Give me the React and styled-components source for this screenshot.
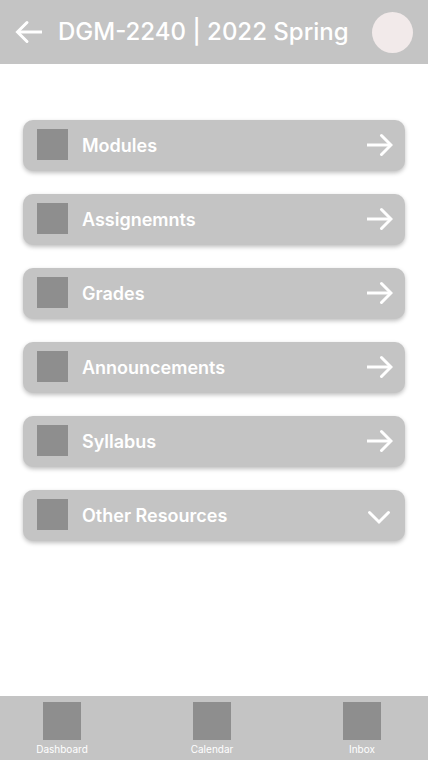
import React from "react";
import styled, { createGlobalStyle } from "styled-components";

const GlobalStyle = createGlobalStyle`
  *, *::before, *::after { box-sizing: border-box; }
  body {
    margin: 0;
    background: #ffffff;
    font-family: Inter, "Liberation Sans", sans-serif;
  }
`;

const Screen = styled.div`
  display: flex;
  flex-direction: column;
  min-height: 100vh;
`;

const Header = styled.header`
  display: flex;
  align-items: center;
  height: 64px;
  padding: 0 15px;
  background: #c4c4c4;
  color: #ffffff;
`;

const IconButton = styled.button`
  display: flex;
  padding: 0;
  border: 0;
  border-radius: ${({ $round }) => ($round ? "50%" : "0")};
  width: ${({ $size }) => $size}px;
  height: ${({ $size }) => $size}px;
  flex: none;
  align-items: center;
  justify-content: center;
  background: ${({ $fill }) => $fill || "transparent"};
  color: inherit;
  cursor: pointer;
`;

const Title = styled.h1`
  flex: 1;
  margin: 0 0 0 15px;
  font-size: 24px;
  font-weight: 500;
  line-height: 32px;
  white-space: nowrap;
`;

const Menu = styled.main`
  display: flex;
  flex: 1;
  flex-direction: column;
  gap: 23px;
  padding: 56px 23px;
`;

const MenuCard = styled.button`
  display: flex;
  align-items: center;
  width: 100%;
  padding: 9px 12px 11px 14px;
  border: 0;
  border-radius: 10px;
  background: #c4c4c4;
  box-shadow: 0 2px 4px rgba(0, 0, 0, 0.25);
  color: #ffffff;
  font-family: inherit;
  text-align: left;
  cursor: pointer;
`;

const Tile = styled.span`
  display: block;
  flex: none;
  width: ${({ $size }) => $size}px;
  height: ${({ $size }) => $size}px;
  background: #8e8e8e;
`;

const CardLabel = styled.span`
  flex: 1;
  margin-left: 14px;
  padding-top: 2px;
  font-size: 18px;
  font-weight: 600;
  line-height: 24px;
`;

const Glyph = styled.svg`
  display: block;
  flex: none;
  fill: none;
  stroke: currentColor;
  stroke-width: 3;
  stroke-linejoin: miter;
`;

const TabBar = styled.nav`
  display: flex;
  justify-content: space-between;
  height: 64px;
  padding: 6px 32px 0 28px;
  background: #c4c4c4;
`;

const Tab = styled.a`
  display: flex;
  flex-direction: column;
  align-items: center;
  gap: 3px;
  width: 68px;
  color: #ffffff;
  font-size: 10px;
  line-height: 12px;
  text-decoration: none;
`;

function ArrowLeft() {
  return (
    <Glyph width="28" height="24" viewBox="0 0 28 24" aria-hidden="true">
      <path d="M27 12H3" />
      <path d="M12 2.5L2.5 12L12 21.5" strokeLinecap="round" />
    </Glyph>
  );
}

function ArrowRight() {
  return (
    <Glyph width="28" height="24" viewBox="0 0 28 24" aria-hidden="true">
      <path d="M2 12H26" />
      <path d="M16.5 2.5L26 12L16.5 21.5" strokeLinecap="round" />
    </Glyph>
  );
}

function ChevronDown() {
  return (
    <Glyph width="28" height="24" viewBox="0 0 28 24" aria-hidden="true">
      <path d="M4.5 9.5L14 19L23.5 9.5" strokeLinecap="round" />
    </Glyph>
  );
}

const sections = [
  { label: "Modules" },
  { label: "Assignemnts" },
  { label: "Grades" },
  { label: "Announcements" },
  { label: "Syllabus" },
  { label: "Other Resources", expandable: true },
];

const tabs = ["Dashboard", "Calendar", "Inbox"];

export default function App() {
  return (
    <>
      <GlobalStyle />
      <Screen>
        <Header>
          <IconButton type="button" $size={28} aria-label="Back">
            <ArrowLeft />
          </IconButton>
          <Title>DGM-2240 | 2022 Spring</Title>
          <IconButton type="button" $size={41} $round $fill="#f2eaea" aria-label="Profile" />
        </Header>
        <Menu>
          {sections.map(({ label, expandable }) => (
            <MenuCard key={label} type="button" aria-expanded={expandable ? false : undefined}>
              <Tile $size={31} />
              <CardLabel>{label}</CardLabel>
              {expandable ? <ChevronDown /> : <ArrowRight />}
            </MenuCard>
          ))}
        </Menu>
        <TabBar aria-label="Main">
          {tabs.map((label) => (
            <Tab key={label} href={`#${label.toLowerCase()}`}>
              <Tile $size={38} />
              {label}
            </Tab>
          ))}
        </TabBar>
      </Screen>
    </>
  );
}
